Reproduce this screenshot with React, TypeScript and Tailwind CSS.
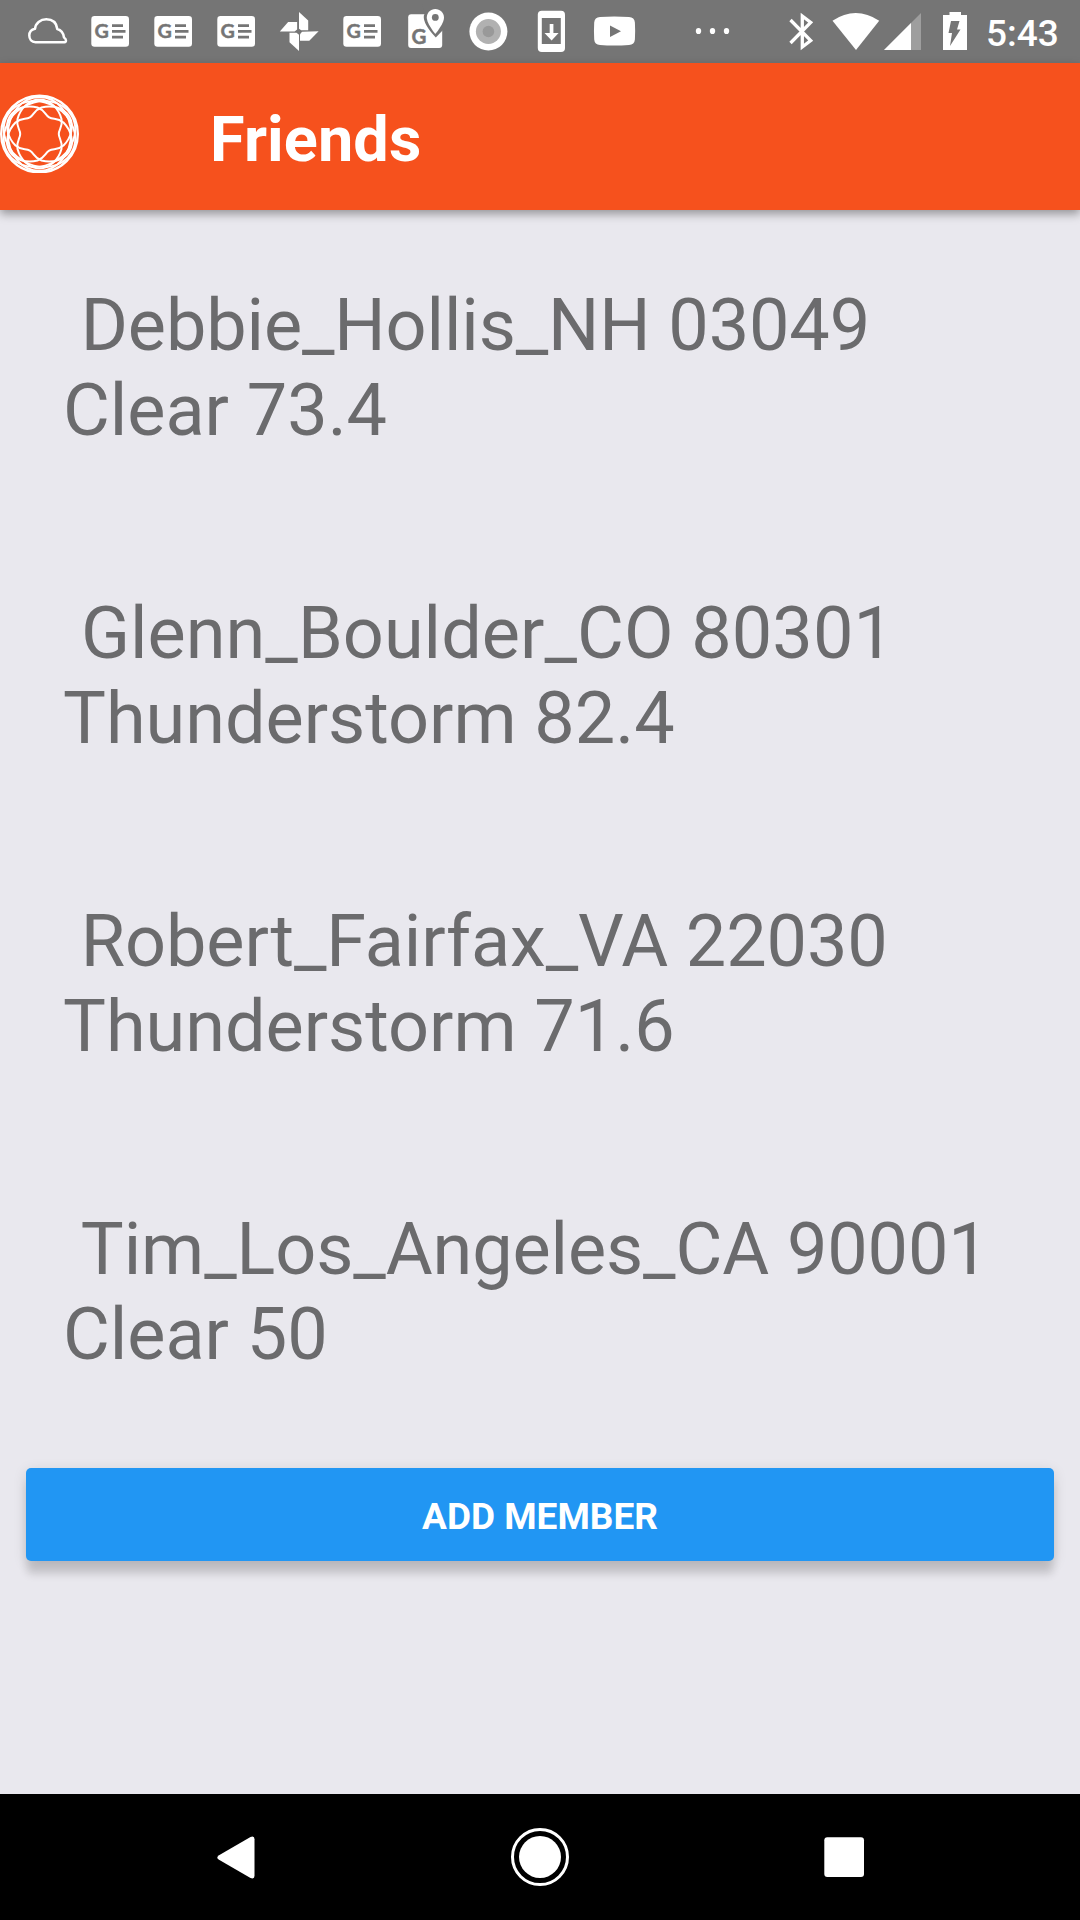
import React from "react";

const friends = [
  { name: "Debbie_Hollis_NH 03049", weather: "Clear 73.4", nameStyle: "tracking-[-0.12px]" },
  { name: "Glenn_Boulder_CO 80301", weather: "Thunderstorm 82.4", nameStyle: "tracking-[0.04px]" },
  { name: "Robert_Fairfax_VA 22030", weather: "Thunderstorm 71.6", nameStyle: "tracking-[-0.1px]" },
  { name: "Tim_Los_Angeles_CA 90001", weather: "Clear 50", nameStyle: "pl-[1.5px] tracking-[-0.1px]" },
];

function Cell({ children }: { children: React.ReactNode }) {
  return (
    <svg className="h-[63px] w-[63px] shrink-0" viewBox="0 0 63 63" fill="white">
      {children}
    </svg>
  );
}

function Cloud() {
  return (
    <Cell>
      <path
        d="M19.5 42.2C15.500 42.200 13.300 39 13.300 35.600C13.300 31.800 16 29.400 19 28.800C19.400 23.200 24.500 19.300 30.300 19.300C36.500 19.300 40.500 23 41.300 29C45.300 30 47.500 34 48 37.500C50.500 39 50.500 42.200 48.500 42.200Z"
        fill="none"
        stroke="white"
        strokeWidth="2.500"
        strokeLinejoin="round"
      />
    </Cell>
  );
}

function News() {
  return (
    <Cell>
      <rect x="12.300" y="16.100" width="37.700" height="30.600" rx="3.300" />
      <text x="15.400" y="38.200" fontSize="19.800" fontWeight="700" fontFamily="Lato, sans-serif" fill="#757575" stroke="#757575" strokeWidth="0.400">
        G
      </text>
      <path d="M33 24.200h11v2.700H33zM33 30h13.500v2.700H33zM33 35.800h11v2.700H33z" fill="#757575" />
    </Cell>
  );
}

function Pinwheel() {
  return (
    <Cell>
      <path d="M31 12l9.200 8.500v9.700h-7l-2.200-1.500z" />
      <path d="M50.600 31.200l-9.300 9.500h-9.300v-6.500l2-2.500z" />
      <path d="M31 51l-9.500-8.800v-9.400h7l2.500 2z" />
      <path d="M11.800 31.500l8.300-9.500h9v7.500l-2.500 2z" />
    </Cell>
  );
}

function MapPin() {
  return (
    <Cell>
      <rect x="14.200" y="14.300" width="34" height="33.800" rx="3" />
      <text x="17.600" y="44" fontSize="20.500" fontWeight="700" fontFamily="Lato, sans-serif" fill="#757575" stroke="#757575" strokeWidth="0.500">
        G
      </text>
      <path d="M28 3H60V30L48.500 30.500L41.800 37.500Q29 24 29.800 16C30 14.800 30.300 14.500 30.600 14Z" fill="#757575" />
      <path d="M41.300 9C46 9 50 12.700 50 17.600C50 24 41.300 34 41.300 34S32.800 24 32.800 17.600C32.800 12.700 36.500 9 41.300 9Z" />
      <circle cx="41.300" cy="17.400" r="3.400" fill="#757575" />
    </Cell>
  );
}

function Target() {
  return (
    <Cell>
      <circle cx="31.400" cy="31.500" r="19" />
      <circle cx="31.400" cy="31.500" r="12.500" fill="#b1b1b1" />
      <circle cx="31.400" cy="31.500" r="5.800" fill="#999999" />
    </Cell>
  );
}

function Download() {
  return (
    <Cell>
      <rect x="17.800" y="10.800" width="27.200" height="41.200" rx="4" />
      <path d="M21.800 18h19v26h-19z" fill="#757575" />
      <path d="M29.700 24h3.700v9h5.200l-7 7.500l-7.100-7.500h5.200z" />
    </Cell>
  );
}

function Video() {
  return (
    <Cell>
      <path d="M17 17.100Q31 16 46 17.100Q51.500 17.500 51.900 22.500Q52.400 31 51.900 39.500Q51.500 44.600 46 45Q31 46 17 45Q11.600 44.600 11.200 39.500Q10.700 31 11.200 22.500Q11.600 17.500 17 17.100Z" />
      <path d="M27 25.500l11 5.800l-11 5.700z" fill="#757575" />
    </Cell>
  );
}

function SystemIcons() {
  return (
    <svg className="h-[63px] w-[340px] shrink-0" viewBox="646 0 340 63" fill="white">
      <ellipse cx="698.500" cy="31" rx="2.700" ry="3.100" />
      <ellipse cx="712.500" cy="31" rx="2.700" ry="3.100" />
      <ellipse cx="726.500" cy="31" rx="2.700" ry="3.100" />
      <path d="M790.500 20L810.700 40.500L802.300 47V16L810.700 22.500L790.500 43" fill="none" stroke="white" strokeWidth="3.300" />
      <path d="M832.500 20.700Q855.700 5.300 879.200 20.700L856 50Z" />
      <path d="M921 13V50H884Z" opacity="0.300" />
      <path d="M911 23V50H884Z" />
      <path d="M949.500 12h11.500v3h6v35h-24V15h6.500z" />
      <path d="M951 21h8.500l-2.500 8.500h3.500L950 46l2-13h-3.500z" fill="#757575" />
    </svg>
  );
}

function Logo() {
  return (
    <svg className="h-[79px] w-[79px]" viewBox="-39.500 -40 79 79" fill="none" stroke="white" strokeWidth="2">
      <circle r="38.300" strokeWidth="2.400" />
      {[0, 60, 120].map((angle) => (
        <g key={angle} transform={`rotate(${angle})`}>
          <ellipse rx="31.500" ry="37" strokeWidth="1.900" />
          <path d="M0 -34.500C10 -34.500 19 -26 22 -15C23.500 -7 19.300 -5 19.300 0S23.500 7 22 15C19 26 10 34.500 0 34.500S-19 26 -22 15C-23.500 7 -19.300 5 -19.300 0S-23.500 -7 -22 -15C-19 -26 -10 -34.500 0 -34.500Z" />
        </g>
      ))}
    </svg>
  );
}

export default function App() {
  return (
    <div className="flex h-[1920px] w-[1080px] flex-col overflow-hidden bg-[#e9e8ee] font-['Roboto',sans-serif]">
      <div className="flex h-[63px] shrink-0 items-center bg-[#757575] pl-4">
        <Cloud />
        <News />
        <News />
        <News />
        <Pinwheel />
        <News />
        <MapPin />
        <Target />
        <Download />
        <Video />
        <SystemIcons />
        <span className="mt-[4px] text-[37px] leading-none font-medium whitespace-nowrap text-white">5:43</span>
      </div>

      <header className="flex h-[147px] shrink-0 items-start bg-[#f6511d] shadow-[0_4px_9px_rgba(0,0,0,0.36)]">
        <div className="mt-[31px] w-[210px]">
          <Logo />
        </div>
        <h1 className="mt-[40px] text-[63px] leading-[74px] font-bold tracking-[0.1px] text-white">Friends</h1>
      </header>

      <main className="flex grow flex-col">
        <ul className="flex flex-col gap-[138px] pt-[73px] pl-[63px]">
          {friends.map((friend) => (
            <li key={friend.name} className="text-[72px] leading-[85px] whitespace-pre text-[#6b6b6d]">
              <p className={friend.nameStyle}>{" " + friend.name}</p>
              <p className="tracking-[-0.03px]">{friend.weather}</p>
            </li>
          ))}
        </ul>
        <button className="mx-[26px] mt-[91px] h-[93px] rounded-[5px] bg-[#2196f3] pt-[5px] text-[37px] font-bold text-white shadow-[0_14px_9px_-1px_rgba(0,0,0,0.14),0_3px_14px_rgba(0,0,0,0.12)]">
          ADD MEMBER
        </button>
      </main>

      <nav className="flex h-[126px] shrink-0 items-center justify-center gap-[244px] bg-black">
        <svg className="h-[60px] w-[60px]" viewBox="0 0 60 60" fill="white">
          <path d="M13 28.200Q9.500 30.500 13 32.800L44.500 51Q48.500 52.500 48.500 48.800V12.200Q48.500 8.500 44.500 10Z" />
        </svg>
        <svg className="h-[60px] w-[60px]" viewBox="0 0 60 60" fill="white">
          <circle cx="30" cy="30" r="27.500" fill="none" stroke="white" strokeWidth="3" />
          <circle cx="30" cy="30" r="21" />
        </svg>
        <svg className="h-[60px] w-[60px]" viewBox="0 0 60 60" fill="white">
          <rect x="10.300" y="10.300" width="39.700" height="39.700" rx="3" />
        </svg>
      </nav>
    </div>
  );
}
